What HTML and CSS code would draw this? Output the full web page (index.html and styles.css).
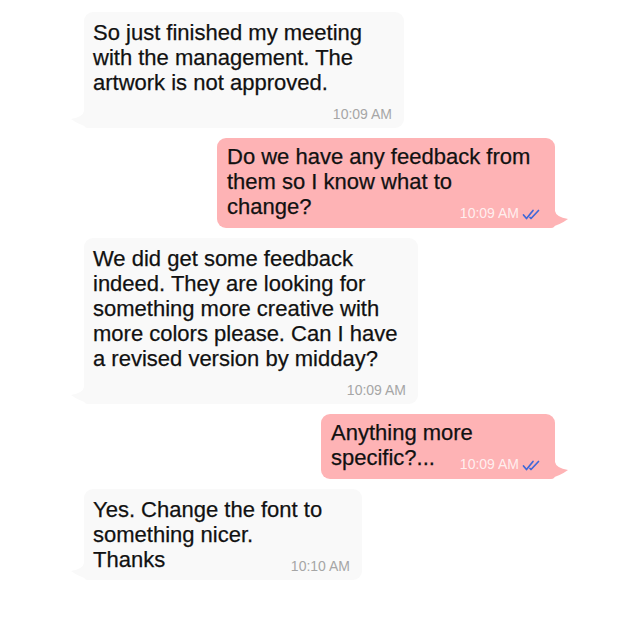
FILE: index.html
```html
<!DOCTYPE html>
<html lang="en">
<head>
<meta charset="utf-8">
<title>Chat</title>
<link rel="stylesheet" href="styles.css">
</head>
<body>
<div class="chat">
  <div class="msg in w-320">
    <p class="text">So just finished my meeting<br>with the management. The<br>artwork is not approved.<span class="meta">10:09 AM</span></p>
    <svg class="tail" width="20" height="17" viewBox="0 0 20 17"><path d="M0,0 L7,0 Q8,6 20,8 Q12,14 0,17 Z"/></svg>
  </div>
  <div class="msg out w-338">
    <p class="text">Do we have any feedback from<br>them so I know what to<br>change?<span class="meta">10:09 AM<svg class="ticks" width="18" height="11" viewBox="0 0 18 11"><path d="M1.5,6 L4.5,9.5 L11,1.5 M8,8.5 L9,9.5 L16.5,1.5"/></svg></span></p>
    <svg class="tail" width="20" height="17" viewBox="0 0 20 17"><path d="M0,0 L7,0 Q8,6 20,8 Q12,14 0,17 Z"/></svg>
  </div>
  <div class="msg in w-334">
    <p class="text">We did get some feedback<br>indeed. They are looking for<br>something more creative with<br>more colors please. Can I have<br>a revised version by midday?<span class="meta">10:09 AM</span></p>
    <svg class="tail" width="20" height="17" viewBox="0 0 20 17"><path d="M0,0 L7,0 Q8,6 20,8 Q12,14 0,17 Z"/></svg>
  </div>
  <div class="msg out w-234">
    <p class="text">Anything more<br>specific?...<span class="meta">10:09 AM<svg class="ticks" width="18" height="11" viewBox="0 0 18 11"><path d="M1.5,6 L4.5,9.5 L11,1.5 M8,8.5 L9,9.5 L16.5,1.5"/></svg></span></p>
    <svg class="tail" width="20" height="17" viewBox="0 0 20 17"><path d="M0,0 L7,0 Q8,6 20,8 Q12,14 0,17 Z"/></svg>
  </div>
  <div class="msg in w-278">
    <p class="text">Yes. Change the font to<br>something nicer.<br>Thanks<span class="meta">10:10 AM</span></p>
    <svg class="tail" width="20" height="17" viewBox="0 0 20 17"><path d="M0,0 L7,0 Q8,6 20,8 Q12,14 0,17 Z"/></svg>
  </div>
</div>
</body>
</html>
```
FILE: styles.css
```css
* { box-sizing: border-box; }

html, body {
  margin: 0;
  background: #ffffff;
}

body {
  font-family: "Liberation Sans", Arial, Helvetica, sans-serif;
  color: #111111;
}

.chat {
  display: flex;
  flex-direction: column;
  gap: 10px;
  padding: 12px 85px 0 84px;
}

.msg {
  position: relative;
  padding: 6px 12px 7px 9px;
  border-radius: 9px;
}

.msg.in {
  align-self: flex-start;
  background: #f9f9f9;
  border-bottom-left-radius: 4px;
  padding-top: 8px;
  padding-bottom: 6px;
}

.msg.out {
  align-self: flex-end;
  background: #feb3b5;
  border-bottom-right-radius: 4px;
  padding-left: 10px;
  padding-right: 15px;
}

.w-320 { width: 320px; }
.w-338 { width: 338px; }
.w-334 { width: 334px; }
.w-234 { width: 234px; }
.w-278 { width: 278px; }

.text {
  display: flow-root;
  margin: 0;
  font-size: 22px;
  line-height: 25px;
  -webkit-text-stroke: 0.25px #111111;
}

.meta {
  float: right;
  margin: 11px 0 0 10px;
  font-size: 14px;
  line-height: 16px;
  white-space: nowrap;
  -webkit-text-stroke: 0;
}

.in .meta { color: #a6a6a6; }
.out .meta { color: rgba(255, 255, 255, 0.8); }

.ticks {
  margin-left: 3px;
  vertical-align: -2px;
}

.ticks path {
  fill: none;
  stroke: #3f68d8;
  stroke-width: 1.7;
  stroke-linecap: round;
  stroke-linejoin: round;
}

.tail {
  position: absolute;
  bottom: 0;
}

.out .tail {
  right: -13px;
  fill: #feb3b5;
}

.in .tail {
  left: -13px;
  transform: scaleX(-1);
  fill: #f9f9f9;
}
```
